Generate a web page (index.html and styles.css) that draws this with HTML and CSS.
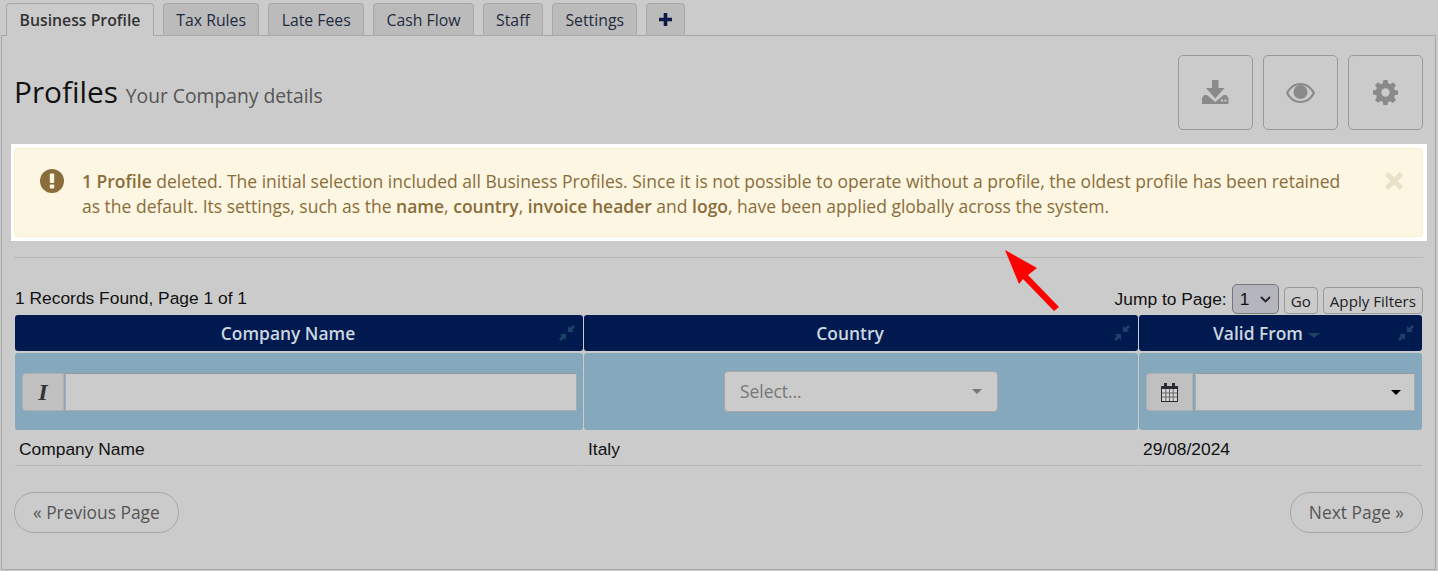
FILE: index.html
```html
<!DOCTYPE html>
<html lang="en">
<head>
<meta charset="utf-8">
<title>Profiles</title>
<link rel="stylesheet" href="styles.css">
</head>
<body>
<nav class="tabs">
  <a class="tab active">Business Profile</a>
  <a class="tab">Tax Rules</a>
  <a class="tab">Late Fees</a>
  <a class="tab">Cash Flow</a>
  <a class="tab">Staff</a>
  <a class="tab">Settings</a>
  <a class="tab plus"><svg width="13" height="13" viewBox="0 0 13 13"><path d="M4.700 0h3.600v4.700H13v3.600H8.300V13H4.700V8.300H0V4.700h4.700z" fill="#0f1a4a"/></svg></a>
</nav>
<main class="panel">
  <header class="head">
    <h1>Profiles <small>Your Company details</small></h1>
    <div class="actions">
      <button class="action"><svg class="icon-up" width="27" height="24" viewBox="0 0 27 24"><path d="M10 0h6.500v8h6L13.250 18.500 4 8h6z" fill="#8a8a8a"/><path d="M2 15h3l8.250 7 8.250-7h3l2 3v6H0v-6z" fill="#8a8a8a"/><rect x="19" y="19.500" width="2" height="2" fill="#ccc"/><rect x="22.500" y="19.500" width="2" height="2" fill="#ccc"/></svg></button>
      <button class="action"><svg width="29" height="20" viewBox="0 0 29 20"><path fill-rule="evenodd" d="M14.500 0C21 0 26.300 4 29 10c-2.700 6-8 10-14.500 10S2.700 16 0 10C2.700 4 8 0 14.500 0zM14.500 2C9.400 2 5 5 2.400 10 5 15 9.400 18 14.500 18S24 15 26.600 10C24 5 19.600 2 14.500 2z" fill="#8a8a8a"/><circle cx="14.500" cy="9" r="7" fill="#8a8a8a"/></svg></button>
      <button class="action"><svg width="25" height="25" viewBox="0 0 24 24"><path fill-rule="evenodd" d="M10 0h4l.6 3.200 2 .8L19.300 2.200l2.800 2.800L20.200 7.600l.8 2L24 10v4l-3 .6-.8 2 1.800 2.700-2.800 2.800-2.700-1.800-2 .8L14 24h-4l-.6-3.100-2-.8-2.700 1.800-2.800-2.800L3.700 16.400l-.8-2L0 14v-4l2.900-.6.800-2L1.900 5l2.800-2.800L7.400 4l2-.8zM12 8a4 4 0 1 0 0 8 4 4 0 0 0 0-8z" fill="#8a8a8a"/></svg></button>
    </div>
  </header>

  <div class="highlight">
    <div class="alert">
      <svg class="alert-icon" width="24" height="24" viewBox="0 0 24 24"><circle cx="12" cy="12" r="12" fill="#8a6d3b"/><rect x="9.800" y="4.500" width="4.400" height="9.500" rx="1" fill="#fcf6e2"/><rect x="9.800" y="15.500" width="4.400" height="4" rx="1" fill="#fcf6e2"/></svg>
      <p class="alert-text"><b>1 Profile</b> deleted. The initial selection included all Business Profiles. Since it is not possible to operate without a profile, the oldest profile has been retained as the default. Its settings, such as the <b>name</b>, <b>country</b>, <b>invoice header</b> and <b>logo</b>, have been applied globally across the system.</p>
      <svg class="alert-close" width="18" height="18" viewBox="0 0 18 18"><path d="M3.500 0L9 5.500 14.500 0 18 3.500 12.500 9l5.500 5.500-3.500 3.500L9 12.500 3.500 18 0 14.500 5.500 9 0 3.500z" fill="#e8e0c8"/></svg>
    </div>
  </div>

  <hr class="rule">

  <div class="toolbar">
    <span class="count">1 Records Found, Page 1 of 1</span>
    <div class="jump">
      <span class="jump-label">Jump to Page:</span>
      <span class="page-select">1<svg width="11" height="7" viewBox="0 0 11 7"><path d="M1 1l4.500 4.500L10 1" fill="none" stroke="#222" stroke-width="1.800"/></svg></span>
      <button class="mini">Go</button>
      <button class="mini">Apply Filters</button>
    </div>
  </div>

  <div class="grid">
    <div class="th">Company Name<svg class="pin" width="16" height="16" viewBox="0 0 16 16"><path d="M14 0l2 2-3 3 2 2H9V1l2 2zM7 9v6l-2-2-3 3-2-2 3-3-2-2z" fill="#1d4468"/></svg></div>
    <div class="th">Country<svg class="pin" width="16" height="16" viewBox="0 0 16 16"><path d="M14 0l2 2-3 3 2 2H9V1l2 2zM7 9v6l-2-2-3 3-2-2 3-3-2-2z" fill="#1d4468"/></svg></div>
    <div class="th sorted">Valid From<i class="sort"></i><svg class="pin" width="16" height="16" viewBox="0 0 16 16"><path d="M14 0l2 2-3 3 2 2H9V1l2 2zM7 9v6l-2-2-3 3-2-2 3-3-2-2z" fill="#1d4468"/></svg></div>

    <div class="filter">
      <div class="input-group">
        <span class="addon italic">I</span>
        <span class="field"></span>
      </div>
    </div>
    <div class="filter center">
      <div class="select">Select...<i class="caret"></i></div>
    </div>
    <div class="filter tight">
      <div class="input-group">
        <span class="addon"><svg width="17" height="19" viewBox="0 0 17 19"><rect x="1" y="6" width="15" height="12" fill="#d5d5d5"/><path d="M4.800 6v12M8.500 6v12M12.200 6v12M1 10h15M1 14h15" stroke="#666" stroke-width="1" fill="none"/><path fill-rule="evenodd" d="M3 0h3v3h5V0h3v3h3v16H0V3h3zM1 6v12h15V6z" fill="#2b2b33"/></svg></span>
        <span class="field"><i class="caret dark"></i></span>
      </div>
    </div>

    <div class="td">Company Name</div>
    <div class="td">Italy</div>
    <div class="td">29/08/2024</div>
  </div>

  <div class="pager">
    <a class="page-btn">« Previous Page</a>
    <a class="page-btn">Next Page »</a>
  </div>
</main>
<svg class="arrow" width="56" height="62" viewBox="0 0 56 62"><path d="M0 0L32 18 23 25 54 57 49 61 18 29 14 34z" fill="#fd0000"/></svg>
</body>
</html>
```
FILE: styles.css
```css
* { box-sizing: border-box; }
html, body { margin: 0; height: 571px; overflow: hidden; }
body {
  position: relative;
  background: #cbcbcb;
  font-family: "Open Sans", sans-serif;
  color: #333;
  padding: 3px 2px 0 1px;
  display: flex;
  flex-direction: column;
}
.tabs {
  display: flex;
  gap: 9px;
  padding-left: 5px;
  height: 33px;
  margin-bottom: -1px;
  position: relative;
  z-index: 1;
}
.tab {
  display: flex;
  align-items: center;
  justify-content: center;
  height: 32px;
  padding: 0 12.350px;
  font-size: 15.800px;
  color: #222b3e;
  background: #bbbbbb;
  border: 1px solid #a8a8a8;
  border-bottom: 0;
  border-radius: 4px 4px 0 0;
}
.tab.active {
  height: 33px;
  padding: 0 12.500px;
  background: #cbcbcb;
  font-weight: 600;
  color: #333;
}
.tab.plus { width: 39px; padding: 0; }
.panel {
  height: 535px;
  border: 1px solid #a8a8a8;
  padding: 0 12px;
}
.head {
  display: flex;
  justify-content: space-between;
  height: 108px;
  padding-top: 19px;
}
h1 {
  margin: 15px 0 0;
  font-size: 29.800px;
  font-weight: 400;
  line-height: 44px;
  color: #111;
}
h1 small { font-size: 19.300px; color: #555; }
.actions { display: flex; gap: 10px; }
.action {
  width: 75px;
  height: 75px;
  background: transparent;
  border: 1px solid #999;
  border-radius: 5px;
  display: flex;
  align-items: center;
  justify-content: center;
  padding: 0;
}
.icon-up { margin-bottom: 2px; }
.highlight {
  margin: 0 -4px 0 -3px;
  border-style: solid;
  border-color: #fff;
  border-width: 4px 4px 4px 3px;
  background: #fff;
}
.alert {
  height: 89px;
  background: #fcf6e2;
  border: 1px solid #f7eecb;
  border-radius: 4px;
  display: flex;
  align-items: flex-start;
  padding: 20px 19px 0 25px;
  color: #8a6d3b;
}
.alert-icon { flex: none; margin-right: 18px; }
.alert-text { margin: 0; flex: 1; font-size: 17.500px; line-height: 25px; }
.alert-text b { font-weight: 600; }
.alert-close { flex: none; margin: 3px 0 0 35px; }
.rule {
  border: 0;
  border-top: 1px solid #b8b8b8;
  margin: 16px 0 0;
  height: 1px;
}
.toolbar {
  display: flex;
  justify-content: space-between;
  align-items: flex-end;
  height: 57px;
  padding-bottom: 1px;
  font-family: "Liberation Sans", sans-serif;
  color: #111;
  font-size: 17.400px;
}
.count { padding-bottom: 5px; padding-left: 1px; }
.jump { display: flex; align-items: flex-end; }
.jump-label { padding-bottom: 4px; margin-right: 5px; }
.page-select {
  width: 47px;
  height: 30px;
  margin-right: 5px;
  background: #b5b5bd;
  border: 1px solid #777;
  border-radius: 5px;
  display: flex;
  align-items: center;
  justify-content: space-between;
  padding: 0 7px;
  font-size: 17.400px;
}
.mini {
  height: 27px;
  padding: 0 6px;
  margin-right: 5px;
  background: transparent;
  border: 1px solid #999;
  border-radius: 4px;
  font-family: "Open Sans", sans-serif;
  font-size: 15.150px;
  color: #222;
}
.mini:last-child { margin-right: 0; }
.grid {
  display: grid;
  grid-template-columns: 568px 554px 283px;
  column-gap: 1px;
  margin: 0 0 0 1px;
  width: 1407px;
}
.th {
  position: relative;
  height: 36px;
  background: #001a4f;
  color: #ccd6e0;
  font-weight: 600;
  font-size: 17.400px;
  display: flex;
  align-items: center;
  justify-content: center;
  padding-right: 22px;
  border-radius: 3px;
  margin-bottom: 2px;
}
.th.sorted { padding-right: 28px; }
.pin { position: absolute; right: 8px; top: 10px; }
.sort {
  display: inline-block;
  width: 0;
  height: 0;
  border: 6px solid transparent;
  border-top: 5.500px solid #1d4468;
  border-bottom: 0;
  margin: 5px 0 0 5px;
}
.filter {
  height: 77px;
  background: #85a8bd;
  border-radius: 3px;
  display: flex;
  align-items: center;
  padding: 0 6px 0 7px;
}
.filter.center { justify-content: center; padding: 0; }
.filter.tight { padding: 0 7px; }
.filter.tight .addon { width: 47px; }
.filter.tight .field { margin-left: 2px; }
.input-group { display: flex; flex: 1; height: 38px; margin-top: 1px; }
.addon {
  width: 42px;
  flex: none;
  background: #c0c0c0;
  border: 1px solid #b0b0b0;
  border-radius: 4px 0 0 4px;
  display: flex;
  align-items: center;
  justify-content: center;
}
.italic {
  font-family: "Liberation Serif", serif;
  font-style: italic;
  font-weight: 700;
  font-size: 24px;
  color: #333;
}
.field {
  flex: 1;
  position: relative;
  margin-left: 1px;
  background: #cbcbcb;
  border: 1px solid #aaa;
  border-top-color: #999;
  border-radius: 0 2px 2px 0;
}
.select {
  position: relative;
  width: 274px;
  height: 41px;
  background: #cbcbcb;
  border: 1px solid #a8a8a8;
  border-radius: 4px;
  font-size: 17.400px;
  line-height: 39px;
  padding-left: 15px;
  color: #777;
}
.caret {
  position: absolute;
  right: 15px;
  top: 17px;
  width: 0;
  height: 0;
  border: 5px solid transparent;
  border-top: 5px solid #777;
  border-bottom: 0;
}
.caret.dark { border-top-color: #000; right: 13px; top: 16px; }
.td {
  height: 35px;
  margin-top: 1px;
  padding: 0 0 0 4px;
  font-family: "Liberation Sans", sans-serif;
  font-size: 17.400px;
  line-height: 36px;
  color: #111;
  border-bottom: 1px solid #b8b8b8;
}
.pager {
  display: flex;
  justify-content: space-between;
  margin-top: 26px;
}
.page-btn {
  height: 41px;
  padding: 0 18px;
  border: 1px solid #a8a8a8;
  border-radius: 20px;
  font-size: 17.400px;
  line-height: 39px;
  color: #555;
}
.arrow { position: absolute; left: 1005px; top: 250px; }
```
